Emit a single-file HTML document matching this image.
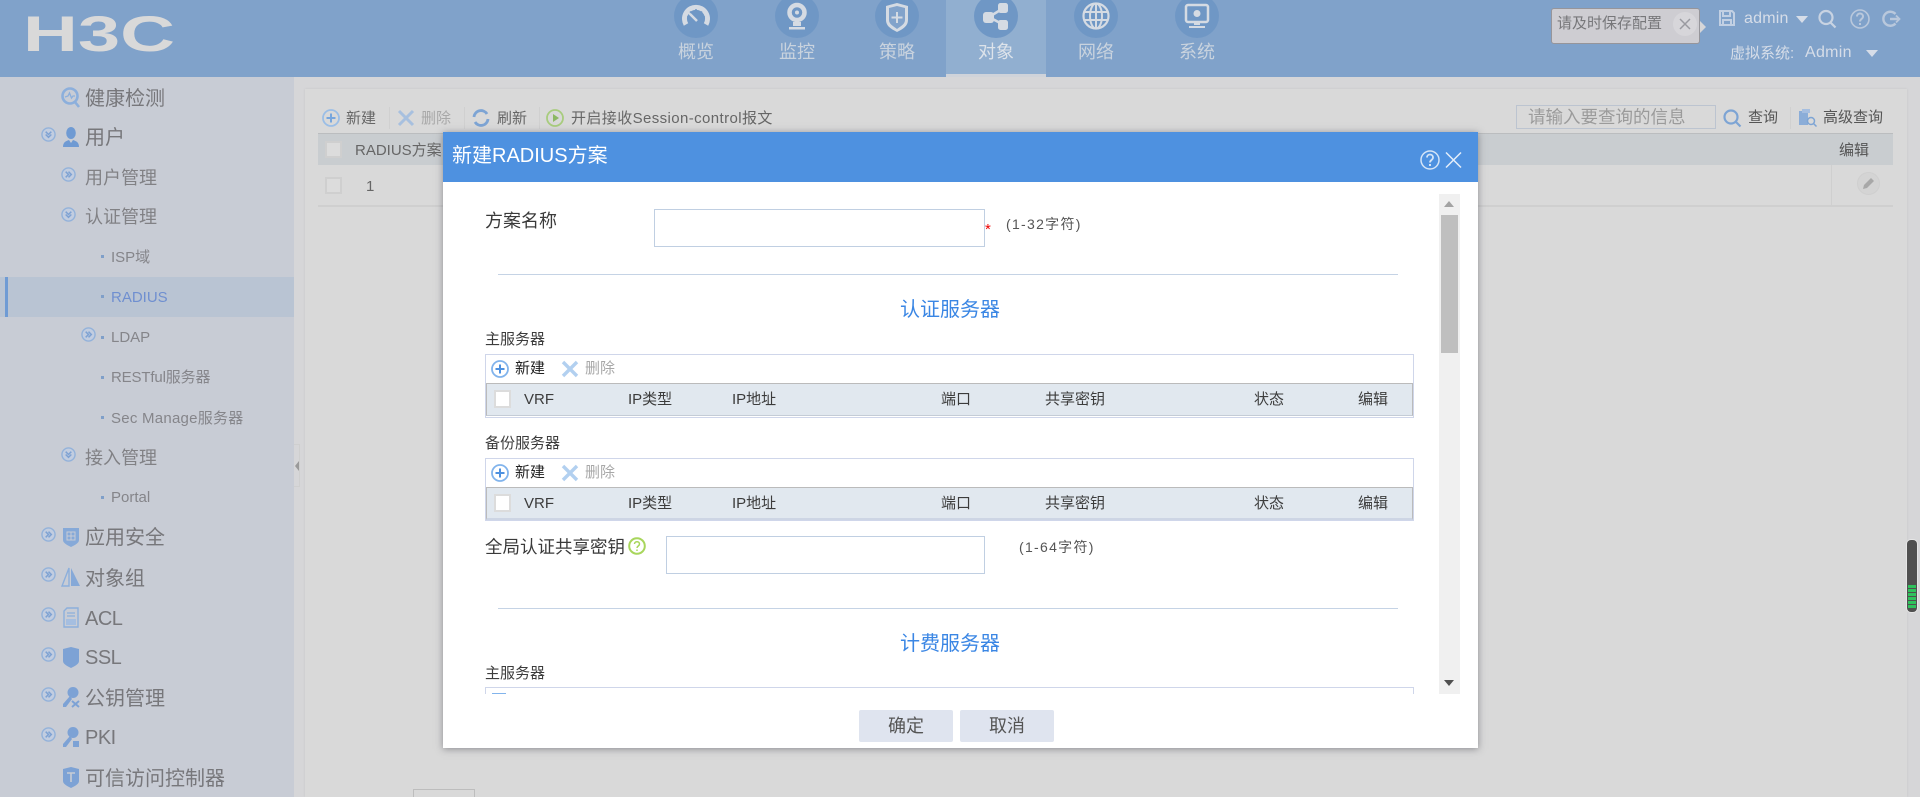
<!DOCTYPE html>
<html lang="zh-CN"><head><meta charset="utf-8"><title>新建RADIUS方案</title>
<style>
html,body{margin:0;padding:0}
body{width:1920px;height:797px;overflow:hidden;position:relative;background:#d9d9d9;font-family:"Liberation Sans","Noto Sans CJK SC",sans-serif;color:#333}
.a{position:absolute}
.t{position:absolute;white-space:nowrap;line-height:20px;height:20px}
svg{position:absolute;overflow:visible}
.nav{font-size:18px;color:#c9d3de;width:100px;text-align:center;top:42px}
.nc{position:absolute;top:-6px;width:44px;height:44px;border-radius:50%;background:#6f97c5}
.s1{font-size:20px;color:#77777b}
.s2{font-size:18px;color:#818185}
.s3{font-size:15px;color:#85858a}
.dot{position:absolute;left:101px;width:3px;height:3px;background:#7f9fc9}
.tb{font-size:15px;color:#666}
.sep{position:absolute;top:107px;width:1px;height:22px;background:#d0d0d0}
.cb{position:absolute;box-sizing:border-box;border:2px solid #cfcfcf;background:#dcdcdc}
.d{font-size:15px;color:#3c3c3c}
.th{position:absolute;left:485px;width:929px;box-sizing:border-box;border:1px solid #cfd6ea;background:#fff}
.hr{position:absolute;left:0;right:0;top:28px;background:#e1e8ef;border-top:1px solid #bbb;border-left:1px solid #bbb;border-right:1px solid #bbb;box-sizing:border-box}
.dv{position:absolute;left:498px;width:900px;height:1px;background:#c5d3e5}
.sec{font-size:20px;color:#3a86e4;left:900px}
.btn{position:absolute;top:710px;width:94px;height:32px;line-height:32px;text-align:center;font-size:18px;color:#555;background:#dfe4ef;border-radius:2px}
.cross{stroke:#b2d0f0;stroke-width:3.4;fill:none}
</style></head><body>
<svg width="0" height="0" style="position:absolute"><defs>
<symbol id="er" viewBox="0 0 16 16"><circle cx="8" cy="8" r="7" fill="#c2cde0" stroke="#93b2da" stroke-width="1.5"/><path d="M5 5l3 3-3 3M8 5l3 3-3 3" fill="none" stroke="#7ea2d3" stroke-width="1.6"/></symbol>
<symbol id="ed" viewBox="0 0 16 16"><circle cx="8" cy="8" r="7" fill="#c2cde0" stroke="#93b2da" stroke-width="1.5"/><path d="M5 5l3 3 3-3M5 8l3 3 3-3" fill="none" stroke="#7ea2d3" stroke-width="1.6"/></symbol>
<symbol id="plus" viewBox="0 0 18 18"><circle cx="9" cy="9" r="8" fill="none" stroke="#82b4ec" stroke-width="1.8"/><path d="M4.5 9h9M9 4.5v9" stroke="#4e91e0" stroke-width="2"/></symbol>
</defs></svg>

<!-- header -->
<div class="a" style="left:0;top:0;width:1920px;height:77px;background:#80a2ca"></div>
<svg style="left:26px;top:15px" width="146" height="37" viewBox="0 0 146 37"><text x="-3" y="36" font-family="Liberation Sans" font-weight="bold" font-size="50" textLength="152" lengthAdjust="spacingAndGlyphs" fill="#d9d9d9">H3C</text></svg>
<div class="a" style="left:946px;top:0;width:100px;height:74px;background:#91afd0"></div>
<div class="a" style="left:946px;top:74px;width:100px;height:3px;background:#cfd3da"></div>

<div class="nc" style="left:674px"></div>
<svg style="left:674px;top:-6px" width="44" height="44" viewBox="0 0 44 44" fill="none" stroke="#d5dbe3"><path d="M12 30.500a11.500 11.500 0 1 1 20 0" stroke-width="5"/><path d="M23 27l-8-8" stroke-width="2.500"/><path d="M16 17.500l1.500 1.500M22 15v2M28 17.500l-1.500 1.500M13 23h2M29 23h2" stroke-width="1.500" stroke="#6f97c5"/></svg>
<div class="t nav" style="left:646px">概览</div>
<div class="nc" style="left:775px"></div>
<svg style="left:775px;top:-6px" width="44" height="44" viewBox="0 0 44 44" fill="none"><circle cx="22" cy="18.500" r="7.500" stroke="#d5dbe3" stroke-width="4.500"/><circle cx="22" cy="18.500" r="2" fill="#d5dbe3"/><path d="M18 28v4h8v-4z M14 33h16v2.500H14z" fill="#d5dbe3"/></svg>
<div class="t nav" style="left:747px">监控</div>
<div class="nc" style="left:875px"></div>
<svg style="left:875px;top:-6px" width="44" height="44" viewBox="0 0 44 44"><path d="M22 9l11 3v14c0 6-5 9-11 12-6-3-11-6-11-12V12z" fill="#d5dbe3"/><path d="M22 12l8 2v12c0 4-4 6-8 9-4-3-8-5-8-9V14z" fill="#82a3cb"/><path d="M22 18v11M16.500 23.500h11" stroke="#d5dbe3" stroke-width="2"/></svg>
<div class="t nav" style="left:847px">策略</div>
<div class="nc" style="left:974px"></div>
<svg style="left:974px;top:-6px" width="44" height="44" viewBox="0 0 44 44" fill="#d5dbe3"><path d="M15 23l13-8M15 23l13 7" stroke="#d5dbe3" stroke-width="2.500"/><rect x="9" y="18" width="11" height="11" rx="3"/><rect x="24" y="9" width="10" height="10" rx="2.500"/><rect x="24" y="26" width="10" height="10" rx="2.500"/></svg>
<div class="t nav" style="left:946px;color:#dde3ea">对象</div>
<div class="nc" style="left:1074px"></div>
<svg style="left:1074px;top:-6px" width="44" height="44" viewBox="0 0 44 44" fill="none" stroke="#d5dbe3" stroke-width="2"><circle cx="22" cy="22" r="12.500" stroke-width="2.200"/><ellipse cx="22" cy="22" rx="6" ry="12.500"/><path d="M22 9.500v25M10 18h24M10 26h24"/></svg>
<div class="t nav" style="left:1046px">网络</div>
<div class="nc" style="left:1175px"></div>
<svg style="left:1175px;top:-6px" width="44" height="44" viewBox="0 0 44 44"><rect x="11" y="11" width="22" height="17" rx="2" fill="none" stroke="#d5dbe3" stroke-width="2.500"/><circle cx="22" cy="19.500" r="3.500" fill="#d5dbe3"/><path d="M19 28v3h6v-3M14 32h16v2H14z" fill="#d5dbe3"/></svg>
<div class="t nav" style="left:1147px">系统</div>

<!-- top right -->
<div class="a" style="left:1551px;top:8px;width:149px;height:36px;box-sizing:border-box;background:#cecdd2;border:1px solid #96959a;border-radius:3px"></div>
<div class="a" style="left:1700px;top:21px;border-left:6px solid #d6d6d8;border-top:6px solid transparent;border-bottom:6px solid transparent"></div>
<div class="t" style="left:1557px;top:14px;font-size:15px;color:#77777a">请及时保存配置</div>
<div class="a" style="left:1673px;top:12px;width:24px;height:24px;border-radius:50%;background:#d7d6da"></div>
<svg style="left:1679px;top:18px" width="12" height="12" viewBox="0 0 12 12"><path d="M1 1l10 10M11 1L1 11" stroke="#9a9aa0" stroke-width="1.500"/></svg>
<svg style="left:1719px;top:10px" width="16" height="16" viewBox="0 0 16 16" fill="none" stroke="#c2d0e3" stroke-width="2"><path d="M1 1h12l2 2v12H1z"/><path d="M4 1v5h7V1M4 15v-5h8v5"/></svg>
<div class="t" style="left:1744px;top:9px;font-size:16px;color:#d6dde8;letter-spacing:.2px">admin</div>
<div class="a" style="left:1796px;top:16px;border-top:7px solid #d6dde8;border-left:6px solid transparent;border-right:6px solid transparent"></div>
<svg style="left:1818px;top:10px" width="19" height="18" viewBox="0 0 19 18" fill="none" stroke="#c8d3e2" stroke-width="2.200"><circle cx="8" cy="7.500" r="6.500"/><path d="M12.500 12.500l5 5"/></svg>
<svg style="left:1850px;top:9px" width="20" height="20" viewBox="0 0 20 20" fill="none" stroke="#b9c8dc" stroke-width="1.600"><circle cx="10" cy="10" r="9"/><path d="M7 7.500c0-4 6-4 6 0 0 2.500-3 2.500-3 5" stroke-width="2"/><path d="M10 14v2" stroke-width="2"/></svg>
<svg style="left:1881px;top:10px" width="20" height="18" viewBox="0 0 20 18" fill="none" stroke="#b9c8dc" stroke-width="2.400"><path d="M14.500 13.500a7 7 0 1 1 0-9.500"/><path d="M9 9h9" /><path d="M15 5.500l3.500 3.500-3.500 3.500" stroke-width="1.800"/></svg>
<div class="t" style="left:1730px;top:44px;font-size:15px;color:#d6dde8">虚拟系统:</div>
<div class="t" style="left:1805px;top:43px;font-size:16px;color:#d6dde8;letter-spacing:.3px">Admin</div>
<div class="a" style="left:1866px;top:50px;border-top:7px solid #d6dde8;border-left:6px solid transparent;border-right:6px solid transparent"></div>

<!-- sidebar -->
<div class="a" style="left:0;top:77px;width:294px;height:720px;background:#c8ccd5"></div>
<div class="a" style="left:0;top:277px;width:294px;height:40px;background:#b9c4d3"></div>
<div class="a" style="left:5px;top:277px;width:3px;height:40px;background:#6f9bd4"></div>

<svg style="left:61px;top:87px" width="19" height="21" viewBox="0 0 19 21" fill="none" stroke="#8cafdc" stroke-width="2.600"><circle cx="9" cy="9" r="7.500"/><path d="M14 15l4 5"/><path d="M4 10l3-1 1.500-3 2 5 1.500-2h2" stroke-width="1.300"/></svg>
<div class="t s1" style="left:85px;top:89px">健康检测</div>

<svg style="left:41px;top:127px" width="15" height="15"><use href="#ed"/></svg>
<svg style="left:62px;top:127px" width="18" height="21" viewBox="0 0 18 21" fill="#6f9ad3"><ellipse cx="9" cy="6" rx="4.800" ry="6"/><path d="M1 20c0-5 3-6 6-7l2 3 2-3c3 1 6 2 6 7z"/></svg>
<div class="t s1" style="left:85px;top:128px">用户</div>

<svg style="left:61px;top:167px" width="15" height="15"><use href="#er"/></svg>
<div class="t s2" style="left:85px;top:168px">用户管理</div>
<svg style="left:61px;top:207px" width="15" height="15"><use href="#ed"/></svg>
<div class="t s2" style="left:85px;top:207px">认证管理</div>

<div class="dot" style="top:255px"></div><div class="t s3" style="left:111px;top:248px">ISP域</div>
<div class="dot" style="top:295px"></div><div class="t s3" style="left:111px;top:288px;color:#6f8fd0">RADIUS</div>
<svg style="left:81px;top:327px" width="15" height="15"><use href="#er"/></svg>
<div class="dot" style="top:336px"></div><div class="t s3" style="left:111px;top:328px">LDAP</div>
<div class="dot" style="top:376px"></div><div class="t s3" style="left:111px;top:368px;letter-spacing:-.15px">RESTful服务器</div>
<div class="dot" style="top:416px"></div><div class="t s3" style="left:111px;top:409px;letter-spacing:.25px">Sec Manage服务器</div>
<svg style="left:61px;top:447px" width="15" height="15"><use href="#ed"/></svg>
<div class="t s2" style="left:85px;top:448px">接入管理</div>
<div class="dot" style="top:496px"></div><div class="t s3" style="left:111px;top:488px">Portal</div>

<svg style="left:41px;top:527px" width="15" height="15"><use href="#er"/></svg>
<svg style="left:63px;top:527px" width="16" height="20" viewBox="0 0 16 20"><path d="M0 1h16v12c0 3-4 5-8 7-4-2-8-4-8-7z" fill="#86a9d8"/><path d="M4 5h8v8H4zM8 5v8M4 9h8" fill="none" stroke="#c8ccd5"/></svg>
<div class="t s1" style="left:85px;top:528px">应用安全</div>

<svg style="left:41px;top:567px" width="15" height="15"><use href="#er"/></svg>
<svg style="left:61px;top:567px" width="19" height="20" viewBox="0 0 19 20"><path d="M8 1v18H1z" fill="none" stroke="#8cafdc" stroke-width="1.400"/><path d="M10 1l9 18h-9z" fill="#86a9d8"/></svg>
<div class="t s1" style="left:85px;top:569px">对象组</div>

<svg style="left:41px;top:607px" width="15" height="15"><use href="#er"/></svg>
<svg style="left:63px;top:607px" width="16" height="21" viewBox="0 0 16 21" fill="none" stroke="#8cafdc" stroke-width="1.400"><path d="M4 1h11v19H1V4z"/><path d="M4 6h8M4 9h8" stroke-width="1.200"/><path d="M3 12h10v6H3z" fill="#a5bee0" stroke="none"/></svg>
<div class="t s1" style="left:85px;top:609px;letter-spacing:-.5px">ACL</div>

<svg style="left:41px;top:647px" width="15" height="15"><use href="#er"/></svg>
<svg style="left:63px;top:647px" width="16" height="21" viewBox="0 0 16 21"><path d="M0 2l8-2 8 2v12c0 3-4 5-8 7-4-2-8-4-8-7z" fill="#7da2d5"/></svg>
<div class="t s1" style="left:85px;top:648px;letter-spacing:-.5px">SSL</div>

<svg style="left:41px;top:687px" width="15" height="15"><use href="#er"/></svg>
<svg style="left:62px;top:687px" width="18" height="21" viewBox="0 0 18 21"><circle cx="11" cy="5.500" r="5.500" fill="#7da2d5"/><path d="M8 9L1 17v3h3l6-8z" fill="#7da2d5"/><path d="M10 14l7 6M17 14l-7 6" stroke="#7da2d5" stroke-width="2"/></svg>
<div class="t s1" style="left:85px;top:689px">公钥管理</div>

<svg style="left:41px;top:727px" width="15" height="15"><use href="#er"/></svg>
<svg style="left:63px;top:727px" width="17" height="21" viewBox="0 0 17 21"><circle cx="10" cy="5.500" r="5.500" fill="#7da2d5"/><path d="M7 9L0 17v3h3l6-8z" fill="#7da2d5"/><rect x="10" y="14" width="6" height="6" fill="#7da2d5"/></svg>
<div class="t s1" style="left:85px;top:728px;letter-spacing:-.5px">PKI</div>

<svg style="left:63px;top:767px" width="16" height="21" viewBox="0 0 16 21"><path d="M0 2l8-2 8 2v12c0 3-4 5-8 7-4-2-8-4-8-7z" fill="#7da2d5"/><path d="M4 6h8M8 6v9" stroke="#c8ccd5" stroke-width="1.600"/></svg>
<div class="t s1" style="left:85px;top:769px">可信访问控制器</div>

<!-- splitter -->
<div class="a" style="left:294px;top:444px;width:6px;height:43px;box-sizing:border-box;border:1px solid #cfcfcf;border-left:none"></div>
<div class="a" style="left:295px;top:461px;border-right:4px solid #9a9a9a;border-top:5px solid transparent;border-bottom:5px solid transparent"></div>

<!-- main panel -->
<div class="a" style="left:294px;top:77px;width:1626px;height:720px;background:#d6d6d8;z-index:-1"></div>
<div class="a" style="left:305px;top:89px;width:1602px;height:708px;background:#d9d9d9;box-shadow:0 0 2px #c4c4c6;z-index:-1"></div>

<svg style="left:322px;top:109px" width="18" height="18"><use href="#plus" opacity=".7"/></svg>
<div class="t tb" style="left:346px;top:109px">新建</div>
<div class="sep" style="left:389px"></div>
<svg style="left:398px;top:110px" width="16" height="16" viewBox="0 0 16 16"><path d="M1 1l14 14M15 1L1 15" stroke="#a7c0df" stroke-width="3"/></svg>
<div class="t tb" style="left:421px;top:109px;color:#a8a8a8">删除</div>
<div class="sep" style="left:464px"></div>
<svg style="left:472px;top:109px" width="18" height="18" viewBox="0 0 18 18" fill="none" stroke="#7da4d4" stroke-width="2.800"><path d="M2 8a7 7 0 0 1 13-3"/><path d="M16 10a7 7 0 0 1-13 3"/></svg>
<div class="t tb" style="left:497px;top:109px">刷新</div>
<div class="sep" style="left:539px"></div>
<svg style="left:546px;top:109px" width="18" height="18" viewBox="0 0 18 18"><circle cx="9" cy="9" r="8" fill="none" stroke="#a8cc7e" stroke-width="1.800"/><path d="M7 5l6 4-6 4z" fill="#8cb863"/></svg>
<div class="t tb" style="left:571px;top:109px;letter-spacing:.4px">开启接收Session-control报文</div>

<div class="a" style="left:1516px;top:105px;width:200px;height:24px;box-sizing:border-box;border:1px solid #bcc4d0"></div>
<div class="t" style="left:1528px;top:107px;font-size:17.500px;color:#9b9b9b">请输入要查询的信息</div>
<svg style="left:1723px;top:109px" width="19" height="19" viewBox="0 0 19 19" fill="none" stroke="#7da4d4" stroke-width="2.200"><circle cx="8" cy="8" r="6.500"/><path d="M12.500 12.500l5 5"/></svg>
<div class="t tb" style="left:1748px;top:108px;color:#555">查询</div>
<div class="sep" style="left:1790px"></div>
<svg style="left:1799px;top:109px" width="18" height="18" viewBox="0 0 18 18"><path d="M0 2h9v14H0z" fill="#8badd8"/><path d="M3 0h8v4H3z" fill="#a5bee0"/><circle cx="12" cy="12" r="3.500" fill="#d9d9d9" stroke="#7da4d4" stroke-width="1.500"/><path d="M14.500 14.500l3 3" stroke="#7da4d4" stroke-width="1.500"/></svg>
<div class="t tb" style="left:1823px;top:108px;color:#555">高级查询</div>

<div class="a" style="left:318px;top:133px;width:1575px;height:32px;background:#c9cdd0;border-top:1px solid #bbbdbf;box-sizing:border-box"></div>
<div class="cb" style="left:325px;top:141px;width:17px;height:17px"></div>
<div class="t" style="left:355px;top:141px;font-size:15px;color:#666">RADIUS方案</div>
<div class="t" style="left:1839px;top:141px;font-size:15px;color:#555">编辑</div>
<div class="cb" style="left:325px;top:177px;width:17px;height:17px"></div>
<div class="t" style="left:366px;top:177px;font-size:15px;color:#666">1</div>
<div class="a" style="left:1831px;top:165px;width:1px;height:40px;background:#cfcfcf"></div>
<div class="a" style="left:318px;top:205px;width:1575px;height:2px;background:#cfcfcf"></div>
<div class="a" style="left:1857px;top:172px;width:23px;height:23px;box-sizing:border-box;border:1px solid #cfcfcf;border-radius:50%;background:#d4d4d4"></div>
<svg style="left:1862px;top:177px" width="13" height="13" viewBox="0 0 13 13"><path d="M9 1l3 3-7 7-4 1 1-4z" fill="#a8a8a8"/></svg>
<div class="a" style="left:413px;top:789px;width:62px;height:8px;box-sizing:border-box;border:1px solid #bdbdbd;border-bottom:none"></div>

<!-- gauge -->
<div class="a" style="left:1907px;top:540px;width:10px;height:72px;box-sizing:content-box;background:#505050;border-radius:4px;box-shadow:0 0 0 1px #e6e6e6"></div>
<div class="a" style="left:1908px;top:585px;width:8px;height:24px;background:repeating-linear-gradient(#2fc25c 0,#2fc25c 3px,#505050 3px,#505050 4px)"></div>

<!-- dialog -->
<div class="a" style="left:443px;top:132px;width:1035px;height:616px;background:#fff;box-shadow:0 1px 7px rgba(60,60,70,.5)"></div>
<div class="a" style="left:443px;top:132px;width:1035px;height:50px;background:#4e91e0"></div>
<div class="t" style="left:452px;top:146px;font-size:20px;color:#fff">新建RADIUS方案</div>
<svg style="left:1420px;top:150px" width="20" height="20" viewBox="0 0 20 20" fill="none" stroke="#d4e4f7" stroke-width="1.500"><circle cx="10" cy="10" r="9"/><path d="M7 7.500c0-4 6-4 6 0 0 2.500-3 2.500-3 5" stroke-width="1.800"/><path d="M10 14v2" stroke-width="2"/></svg>
<svg style="left:1445px;top:152px" width="17" height="16" viewBox="0 0 17 16"><path d="M1 .5l15 15M16 .5l-15 15" stroke="#e4eefa" stroke-width="1.500"/></svg>

<div class="t" style="left:485px;top:211px;font-size:18px;color:#3a3a3a">方案名称</div>
<div class="a" style="left:654px;top:209px;width:331px;height:38px;box-sizing:border-box;border:1px solid #c0cfe2"></div>
<div class="t" style="left:985px;top:220px;font-size:15px;color:#e00">*</div>
<div class="t" style="left:1006px;top:214px;font-size:14px;color:#555;letter-spacing:1.300px">(1-32字符)</div>
<div class="dv" style="top:274px"></div>
<div class="t sec" style="top:300px">认证服务器</div>
<div class="t d" style="left:485px;top:330px">主服务器</div>

<div class="th" style="top:354px;height:64px"><div class="hr" style="height:33px;border-bottom:1px solid #c4ccd6"></div></div>
<svg style="left:491px;top:360px" width="18" height="18"><use href="#plus"/></svg>
<div class="t d" style="left:515px;top:359px;color:#222">新建</div>
<svg style="left:562px;top:361px" width="16" height="16" viewBox="0 0 16 16"><path class="cross" d="M1 1l14 14M15 1L1 15"/></svg>
<div class="t d" style="left:585px;top:359px;color:#a8a8a8">删除</div>
<div class="cb" style="left:494px;top:390px;width:17px;height:18px;background:#fff;border-color:#dcdcdc"></div>
<div class="t d" style="left:524px;top:390px">VRF</div>
<div class="t d" style="left:628px;top:390px">IP类型</div>
<div class="t d" style="left:732px;top:390px">IP地址</div>
<div class="t d" style="left:941px;top:390px">端口</div>
<div class="t d" style="left:1045px;top:390px">共享密钥</div>
<div class="t d" style="left:1254px;top:390px">状态</div>
<div class="t d" style="left:1358px;top:390px">编辑</div>

<div class="t d" style="left:485px;top:434px">备份服务器</div>
<div class="th" style="top:458px;height:63px"><div class="hr" style="height:33px;border-bottom:2px solid #cdd5e4"></div></div>
<svg style="left:491px;top:464px" width="18" height="18"><use href="#plus"/></svg>
<div class="t d" style="left:515px;top:463px;color:#222">新建</div>
<svg style="left:562px;top:465px" width="16" height="16" viewBox="0 0 16 16"><path class="cross" d="M1 1l14 14M15 1L1 15"/></svg>
<div class="t d" style="left:585px;top:463px;color:#a8a8a8">删除</div>
<div class="cb" style="left:494px;top:494px;width:17px;height:18px;background:#fff;border-color:#dcdcdc"></div>
<div class="t d" style="left:524px;top:494px">VRF</div>
<div class="t d" style="left:628px;top:494px">IP类型</div>
<div class="t d" style="left:732px;top:494px">IP地址</div>
<div class="t d" style="left:941px;top:494px">端口</div>
<div class="t d" style="left:1045px;top:494px">共享密钥</div>
<div class="t d" style="left:1254px;top:494px">状态</div>
<div class="t d" style="left:1358px;top:494px">编辑</div>

<div class="t" style="left:485px;top:537px;font-size:17.500px;color:#3a3a3a">全局认证共享密钥</div>
<svg style="left:628px;top:537px" width="18" height="18" viewBox="0 0 18 18" fill="none" stroke="#a8d65c" stroke-width="2"><circle cx="9" cy="9" r="7.800"/><path d="M6.500 7c0-3 5-3 5 0 0 2-2.500 2-2.500 4" stroke-width="1.500"/><path d="M9 12.500v1.500" stroke-width="1.500"/></svg>
<div class="a" style="left:666px;top:536px;width:319px;height:38px;box-sizing:border-box;border:1px solid #c0cfe2"></div>
<div class="t" style="left:1019px;top:537px;font-size:14px;color:#555;letter-spacing:1.300px">(1-64字符)</div>
<div class="dv" style="top:608px"></div>
<div class="t sec" style="top:634px">计费服务器</div>
<div class="t d" style="left:485px;top:664px">主服务器</div>
<div class="a" style="left:485px;top:687px;width:929px;height:7px;box-sizing:border-box;border:1px solid #cfd6ea;border-bottom:none"></div>
<div class="a" style="left:492px;top:693px;width:14px;height:1px;background:#82b4ec"></div>

<div class="a" style="left:1439px;top:194px;width:21px;height:500px;background:#f0f0f0"></div>
<div class="a" style="left:1441px;top:215px;width:17px;height:138px;background:#bfbfbf"></div>
<div class="a" style="left:1444px;top:201px;border-bottom:6px solid #a3a3a3;border-left:5px solid transparent;border-right:5px solid transparent"></div>
<div class="a" style="left:1444px;top:680px;border-top:6px solid #505050;border-left:5px solid transparent;border-right:5px solid transparent"></div>

<div class="btn" style="left:859px">确定</div>
<div class="btn" style="left:960px">取消</div>
</body></html>
